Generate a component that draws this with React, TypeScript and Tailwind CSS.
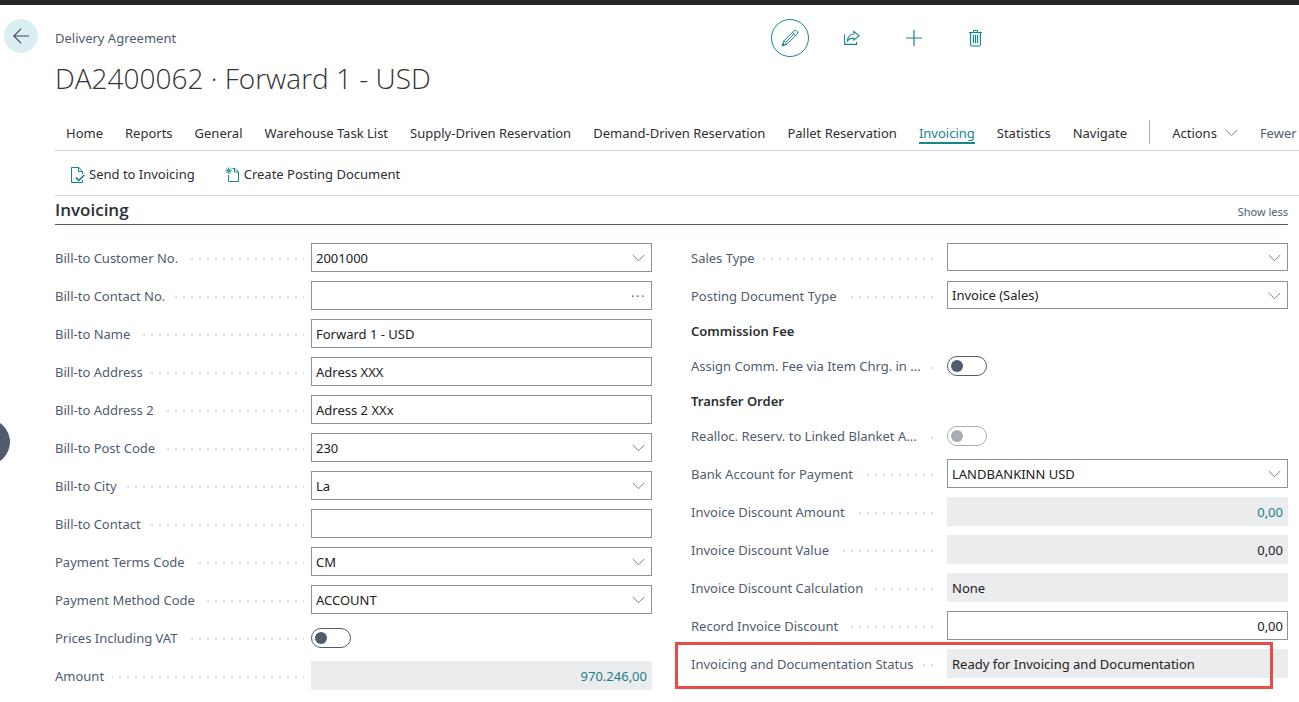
import React, { useId } from "react";

const tabs = [
  "Home",
  "Reports",
  "General",
  "Warehouse Task List",
  "Supply-Driven Reservation",
  "Demand-Driven Reservation",
  "Pallet Reservation",
  "Invoicing",
  "Statistics",
  "Navigate",
];

function ArrowLeft() {
  return (
    <svg width="16" height="16" viewBox="0 0 16 16" fill="none" stroke="#3f4850" strokeWidth="1.2">
      <path d="M0.8 8H16M8 0.8L0.8 8L8 15.2" />
    </svg>
  );
}

function Chevron() {
  return (
    <svg width="13" height="8" viewBox="0 0 13 8" fill="none" stroke="#7b828b" strokeWidth="1">
      <path d="M0.7 0.9L6.5 6.7L12.3 0.9" />
    </svg>
  );
}

function PencilIcon() {
  return (
    <svg width="18" height="18" viewBox="0 0 18 18" fill="none" stroke="#16868a" strokeWidth="1">
      <path d="M1.3 16.7L2.8 12L13 1.8a1.7 1.7 0 0 1 2.4 0l0.8 0.8a1.7 1.7 0 0 1 0 2.4L6 15.2Z" />
      <path d="M2.8 12L6 15.2M11.5 3.3L14.7 6.5M4.8 13.2L12.9 5.1" />
      <path d="M1.2 16.8L1.9 14.4L3.6 16.1Z" fill="#16868a" />
    </svg>
  );
}

function ShareIcon() {
  return (
    <svg width="16" height="16" viewBox="0 0 16 16" fill="none" stroke="#16868a" strokeWidth="1.1">
      <path d="M0.6 4.5V14.4H12.5V12" />
      <path d="M9.8 1.4L15.2 5.8L9.8 10.2V8C7 7.9 5 8.7 3.4 11C3.7 7 6 4.3 9.8 4Z" />
    </svg>
  );
}

function PlusIcon() {
  return (
    <svg width="16" height="16" viewBox="0 0 16 16" fill="none" stroke="#16868a" strokeWidth="1.2">
      <path d="M8 0V16M0 8H16" />
    </svg>
  );
}

function TrashIcon() {
  return (
    <svg width="14" height="17" viewBox="0 0 14 17" fill="none" stroke="#16868a" strokeWidth="1">
      <path d="M1.5 2.5H11.5V15a1 1 0 0 1-1 1H2.5a1 1 0 0 1-1-1Z" fill="#e3f2f3" />
      <path d="M0 2.5H13M4.5 2.5V0.5H8.5V2.5M4.5 5V13M6.5 5V13M8.5 5V13" />
    </svg>
  );
}

function SendDocIcon() {
  return (
    <svg width="14" height="17" viewBox="0 0 14 17" fill="none" stroke="#16868a" strokeWidth="1">
      <path d="M11.5 7V4.5L8 0.5H0.5V15.5H11.5V13" />
      <path d="M7.5 0.5V4.5H11.5" />
      <path d="M4.8 10.6L7.8 13.4L13.3 8" strokeWidth="1.7" />
    </svg>
  );
}

function NewDocIcon() {
  return (
    <svg width="15" height="16" viewBox="0 0 15 16" fill="none" stroke="#16868a" strokeWidth="1">
      <path d="M7.5 1.5H10L13.5 5V14.5H3.5V8" />
      <path d="M9.5 1.5V5H13.5" />
      <path d="M3.7 0.4V7.2M0.3 3.8H7.1M1.3 1.4L6.1 6.2M6.1 1.4L1.3 6.2" strokeWidth="0.9" />
      <circle cx="3.7" cy="3.8" r="0.9" fill="#fff" />
    </svg>
  );
}

function Row({ id, label, short, children }: { id: string; label: string; short?: boolean; children: React.ReactNode }) {
  return (
    <div className={short ? "flex h-7 items-center" : "flex h-[29px] items-center"}>
      <label
        htmlFor={id}
        className="mr-2 block h-full w-62 shrink-0 bg-[linear-gradient(90deg,#d9dbde_2px,transparent_2px)] bg-[length:8px_2px] bg-[position:0_15px] bg-repeat-x text-[#505c6d]"
      >
        <span className="inline-flex h-full items-center bg-white pt-0.5 pr-2 whitespace-nowrap">{label}</span>
      </label>
      {children}
    </div>
  );
}

type FieldProps = {
  label: string;
  value?: string;
  button?: "lookup" | "more";
  readOnly?: boolean;
  right?: boolean;
  teal?: boolean;
};

function Field({ label, value = "", button, readOnly, right, teal }: FieldProps) {
  const id = useId();
  return (
    <Row id={id} label={label}>
      <div
        className={
          readOnly
            ? "flex h-full min-w-0 flex-1 items-center bg-[#ebecee]"
            : "flex h-full min-w-0 flex-1 items-center border border-[#8a929d] bg-white"
        }
      >
        <input
          id={id}
          defaultValue={value}
          readOnly={readOnly}
          className={`h-full min-w-0 flex-1 bg-transparent outline-none ${readOnly ? "px-[5px]" : "px-1"} ${
            right ? "text-right" : ""
          } ${teal ? "text-[#1b7f86]" : "text-[#212121]"}`}
        />
        {button && (
          <button type="button" aria-label={`${label} options`} className="flex h-full w-[26px] shrink-0 items-center justify-center">
            {button === "lookup" ? (
              <Chevron />
            ) : (
              <svg width="12" height="2" viewBox="0 0 12 2" fill="#444c55">
                <path d="M0 0.5H1.5V1.8H0ZM5 0.5H6.5V1.8H5ZM10 0.5H11.5V1.8H10Z" />
              </svg>
            )}
          </button>
        )}
      </div>
    </Row>
  );
}

function SelectField({ label, value }: { label: string; value: string }) {
  const id = useId();
  return (
    <Row id={id} label={label}>
      <div className="relative h-full min-w-0 flex-1">
        <select
          id={id}
          defaultValue={value}
          className="h-7 w-full appearance-none border border-[#8a929d] bg-white px-1 pt-0.5 text-[#212121] outline-none"
        >
          <option value={value}>{value}</option>
        </select>
        <span className="pointer-events-none absolute inset-y-0 right-[7px] flex items-center">
          <Chevron />
        </span>
      </div>
    </Row>
  );
}

function ToggleField({ label, disabled, short }: { label: string; disabled?: boolean; short?: boolean }) {
  const id = useId();
  return (
    <Row id={id} label={label} short={short}>
      <span className="relative flex h-5 w-10">
        <input
          id={id}
          type="checkbox"
          role="switch"
          disabled={disabled}
          className="peer h-5 w-10 appearance-none rounded-full border border-[#505c6d] bg-white disabled:border-[#a6acb6]"
        />
        <span className="pointer-events-none absolute top-1 left-1 size-3 rounded-full bg-[#505c6d] peer-checked:left-6 peer-disabled:bg-[#a6acb6]" />
      </span>
    </Row>
  );
}

function GroupTitle({ children }: { children: React.ReactNode }) {
  return <h3 className="flex h-6 items-center pt-0.5 font-semibold text-[#2b2f33]">{children}</h3>;
}

export default function App() {
  return (
    <div className="relative min-h-screen overflow-hidden bg-white font-['Noto_Sans','Open_Sans',sans-serif] text-[13px] text-[#212121]">
      <div className="h-[5px] bg-[#262626]" />
      <button
        type="button"
        aria-label="Expand side panel"
        className="absolute top-[419px] -left-9 size-[46px] rounded-full bg-[#505c6d]"
      />
      <div className="flex">
        <div className="w-[55px] shrink-0 pt-[14px] pl-1">
          <button type="button" aria-label="Back" className="flex size-[34px] items-center justify-center rounded-full bg-[#daeff2]">
            <ArrowLeft />
          </button>
        </div>
        <main className="min-w-0 flex-1 overflow-hidden">
          <header>
            <div className="mt-[14px] flex h-[38px] items-center">
              <span className="w-179 shrink-0 pt-px text-[#505c6d]">Delivery Agreement</span>
              <div className="flex items-center gap-6">
                <button type="button" aria-label="Edit" className="flex size-[38px] items-center justify-center rounded-full border border-[#16868a]">
                  <PencilIcon />
                </button>
                <button type="button" aria-label="Share" className="flex size-[38px] items-center justify-center">
                  <ShareIcon />
                </button>
                <button type="button" aria-label="New" className="flex size-[38px] items-center justify-center">
                  <PlusIcon />
                </button>
                <button type="button" aria-label="Delete" className="flex size-[38px] items-center justify-center">
                  <TrashIcon />
                </button>
              </div>
            </div>
            <h1 className="h-11 font-['Open_Sans','Noto_Sans',sans-serif] text-[28px] leading-[42px] font-light whitespace-nowrap text-[#333333]">
              DA2400062 · Forward 1 - USD
            </h1>
          </header>

          <nav className="mt-3 flex h-[38px] items-center gap-[22px] border-b border-[#cfd1d3] pl-[11px] leading-[18px] whitespace-nowrap">
            {tabs.map((tab) => (
              <a
                key={tab}
                href="#"
                className={
                  tab === "Invoicing"
                    ? "border-b-2 border-[#16868a] pt-1 text-[#16868a]"
                    : "border-b-2 border-transparent pt-1 text-[#2b2f33]"
                }
              >
                {tab}
              </a>
            ))}
            <span className="h-6 w-px shrink-0 bg-[#a6acb6]" />
            <button type="button" className="flex items-center gap-2 pt-0.5 text-[#2b2f33]">
              Actions <Chevron />
            </button>
            <button type="button" className="pt-0.5 text-[#505c6d]">
              Fewer
            </button>
          </nav>

          <div className="flex h-[45px] items-center gap-[30px] border-b border-[#cfd1d3] pt-1 pl-4 whitespace-nowrap text-[#2b2f33]">
            <button type="button" className="flex items-center gap-1">
              <SendDocIcon /> Send to Invoicing
            </button>
            <button type="button" className="flex items-center gap-1">
              <NewDocIcon /> Create Posting Document
            </button>
          </div>

          <section className="pr-[11px]">
            <div className="flex h-[29px] items-center justify-between border-b border-[#505c6d]">
              <h2 className="font-['Open_Sans','Noto_Sans',sans-serif] text-[17px] font-semibold text-[#2b2f33]">Invoicing</h2>
              <button type="button" className="pt-1 text-[11px] text-[#505c6d]">
                Show less
              </button>
            </div>

            <form className="grid grid-cols-2 gap-x-[39px] pt-[18px]">
              <div className="flex min-w-0 flex-col gap-[9px] [&_label]:mr-[7px] [&_label]:w-[249px]">
                <Field label="Bill-to Customer No." value="2001000" button="lookup" />
                <Field label="Bill-to Contact No." button="more" />
                <Field label="Bill-to Name" value="Forward 1 - USD" />
                <Field label="Bill-to Address" value="Adress XXX" />
                <Field label="Bill-to Address 2" value="Adress 2 XXx" />
                <Field label="Bill-to Post Code" value="230" button="lookup" />
                <Field label="Bill-to City" value="La" button="lookup" />
                <Field label="Bill-to Contact" />
                <Field label="Payment Terms Code" value="CM" button="lookup" />
                <Field label="Payment Method Code" value="ACCOUNT" button="lookup" />
                <ToggleField label="Prices Including VAT" />
                <Field label="Amount" value="970.246,00" readOnly right teal />
              </div>
              <div className="flex min-w-0 flex-col gap-[9px]">
                <SelectField label="Sales Type" value="" />
                <SelectField label="Posting Document Type" value="Invoice (Sales)" />
                <GroupTitle>Commission Fee</GroupTitle>
                <ToggleField label="Assign Comm. Fee via Item Chrg. in ..." short />
                <GroupTitle>Transfer Order</GroupTitle>
                <ToggleField label="Realloc. Reserv. to Linked Blanket A..." disabled short />
                <Field label="Bank Account for Payment" value="LANDBANKINN USD" button="lookup" />
                <Field label="Invoice Discount Amount" value="0,00" readOnly right teal />
                <Field label="Invoice Discount Value" value="0,00" readOnly right />
                <Field label="Invoice Discount Calculation" value="None" readOnly />
                <Field label="Record Invoice Discount" value="0,00" right />
                <div className="relative">
                  <Field label="Invoicing and Documentation Status" value="Ready for Invoicing and Documentation" readOnly />
                  <div className="pointer-events-none absolute -top-[7px] right-[15px] -bottom-[11px] -left-4 border-3 border-[#ea4b46]" />
                </div>
              </div>
            </form>
          </section>
        </main>
      </div>
    </div>
  );
}
